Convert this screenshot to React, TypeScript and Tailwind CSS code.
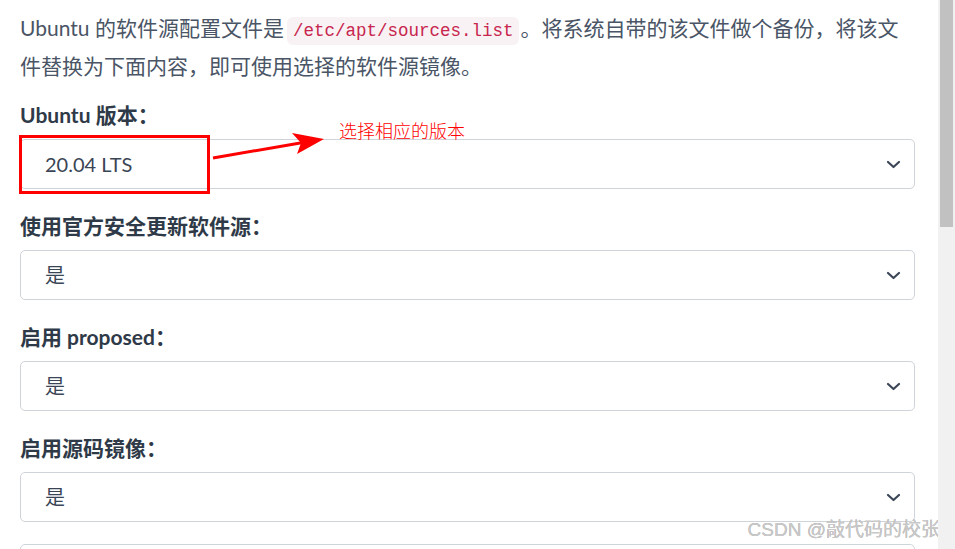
import React from 'react';

const font = "font-['Lato','Noto_Sans_CJK_SC',sans-serif]";

function Chevron() {
    return (
        <svg width="15" height="9" viewBox="0 0 15 9" className="shrink-0">
            <path d="M2 2 L7.5 7 L13 2" fill="none" stroke="#3b4656" strokeWidth="2.2" strokeLinecap="round" strokeLinejoin="round" />
        </svg>
    );
}

function Field({ label, value }: { label: React.ReactNode; value: string }) {
    return (
        <div className="flex flex-col gap-[9px]">
            <label className="h-[30px] leading-[30px] text-[21px] font-bold text-[#2f3a48]">{label}</label>
            <div className="h-[50px] flex items-center justify-between rounded-[5px] border border-[#cfd4da] pl-[24px] pr-[5px] text-[20px] text-[#3a4555]">
                <span>{value}</span>
                <span className="w-[30px] flex justify-center pr-[2px]"><Chevron /></span>
            </div>
        </div>
    );
}

export default function App() {
    return (
        <div className={`flex h-[549px] w-[955px] overflow-hidden bg-white ${font}`}>
            <main className="relative flex-1 pl-[20px] pr-[23px] pt-[9px]">
                <p className="text-[21px] leading-[38px] text-[#4a5566]">
                    Ubuntu 的软件源配置文件是
                    <code className="ml-[3px] mr-[1px] rounded-[6px] bg-[#f9f2f4] px-[6px] py-[4px] font-['Liberation_Mono',monospace] text-[17.5px] leading-[20px] text-[#c7254e]">/etc/apt/sources.list</code>
                    。将系统自带的该文件做个备份，将该文<br />
                    件替换为下面内容，即可使用选择的软件源镜像。
                </p>

                <div className="mt-[15px] flex flex-col gap-[22px]">
                    <Field label="Ubuntu 版本：" value="20.04 LTS" />
                    <Field label="使用官方安全更新软件源：" value="是" />
                    <Field label="启用 proposed：" value="是" />
                    <Field label="启用源码镜像：" value="是" />
                    <div className="h-[50px] rounded-[5px] border border-[#cfd4da]" />
                </div>

                {/* annotation */}
                <div className="absolute left-[19px] top-[135px] h-[59px] w-[191px] border-[3px] border-[#ff0000]" />
                <svg className="absolute left-[210px] top-[128px]" width="120" height="36" viewBox="210 128 120 36">
                    <line x1="213" y1="158" x2="306" y2="142" stroke="#ff0000" strokeWidth="3" />
                    <polygon points="324,139 292,133 301,143 297,154" fill="#ff0000" />
                </svg>
                <span className="absolute left-[339px] top-[119px] text-[18px] leading-[22px] text-[#ff0000] font-['Noto_Sans_CJK_SC',sans-serif] font-light">选择相应的版本</span>

                <span className="absolute right-[-2px] top-[518px] whitespace-nowrap text-[19px] leading-[24px] text-[#c9c9c9] font-['Liberation_Sans','Noto_Sans_CJK_SC',sans-serif] font-normal [text-shadow:0_0_0.5px_#9a9a9a]">CSDN @敲代码的校张</span>
            </main>

            <aside className="relative z-10 w-[17px] shrink-0 bg-[#f1f1f1] px-[2px]">
                <div className="h-[227px] bg-[#c1c1c1]" />
            </aside>
        </div>
    );
}
